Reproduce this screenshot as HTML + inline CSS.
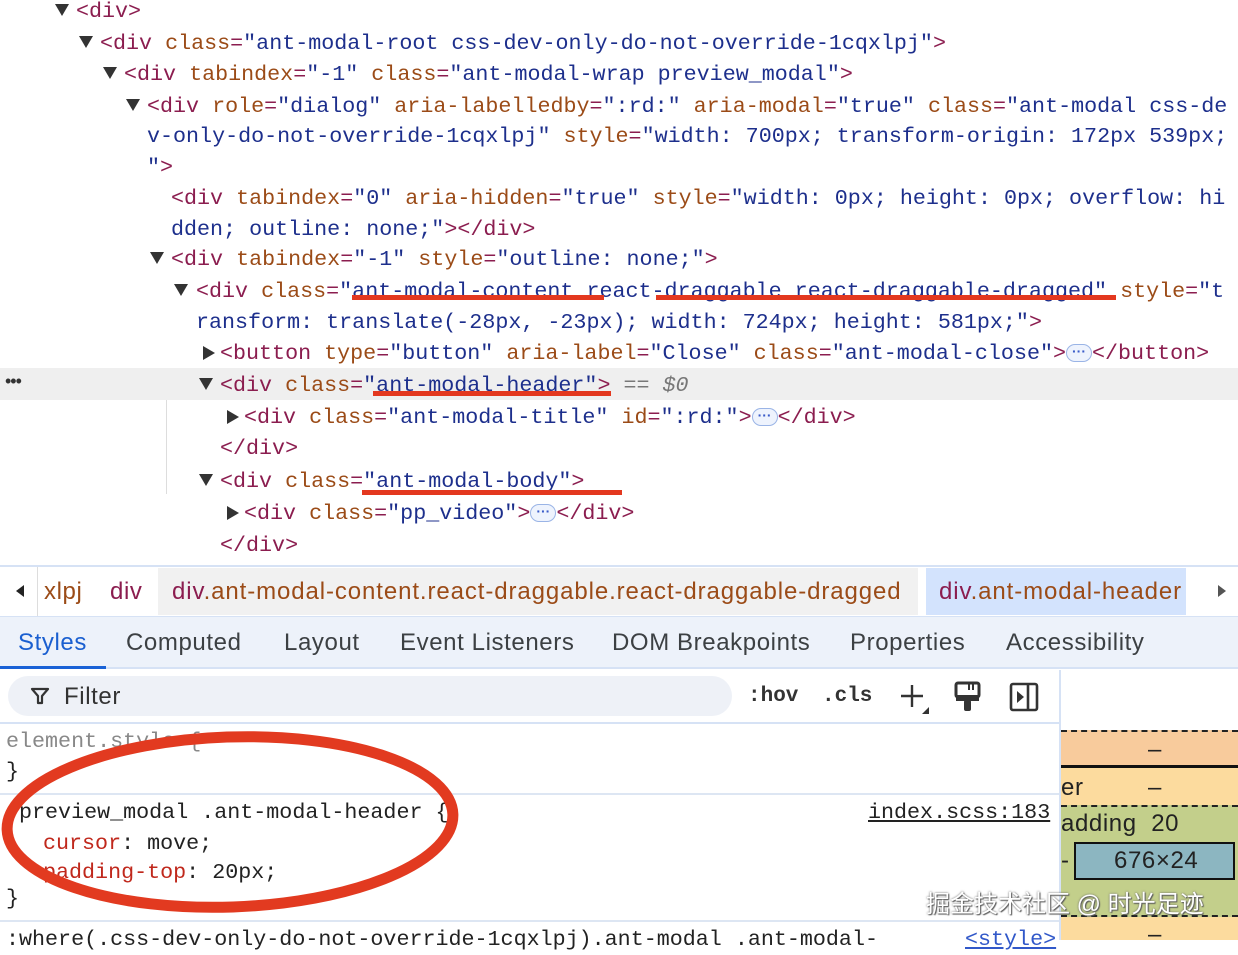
<!DOCTYPE html>
<html><head><meta charset="utf-8">
<style>
*{margin:0;padding:0;box-sizing:border-box}
body{width:1238px;height:940px;overflow:hidden;background:#fff;position:relative;font-family:"Liberation Mono",monospace}
.l{position:absolute;font-family:"Liberation Mono",monospace;font-size:21.7px;line-height:31px;height:31px;white-space:pre;color:#1d2f8c}
.t{color:#8b1d4f}.a{color:#9b4b17}.v{color:#1d2f8c}.k{color:#222}
.tri{position:absolute;width:0;height:0;border-left:7px solid transparent;border-right:7px solid transparent;border-top:12px solid #333}
.trr{position:absolute;width:0;height:0;border-top:7px solid transparent;border-bottom:7px solid transparent;border-left:12px solid #333}
.ul{position:absolute;height:5px;background:#e3381f}
.dots{display:inline-block;width:26px;height:18px;border:1.5px solid #9ab4e6;border-radius:9px;background:#eef3fd;color:#3a5bc9;font-size:14px;line-height:12px;text-align:center;vertical-align:middle;font-family:"Liberation Sans",sans-serif;font-weight:bold}
.s{position:absolute;font-family:"Liberation Sans",sans-serif;font-size:24px;letter-spacing:0.6px;white-space:pre;line-height:30px}
</style></head><body>

<div class="tri" style="left:55px;top:4px"></div>
<div class="l" style="left:76px;top:-4px"><span class="t">&lt;div&gt;</span></div>
<div class="tri" style="left:79px;top:36px"></div>
<div class="l" style="left:100px;top:28px"><span class="t">&lt;div </span><span class="a">class</span><span class="t">=</span>"ant-modal-root css-dev-only-do-not-override-1cqxlpj"<span class="t">&gt;</span></div>
<div class="tri" style="left:103px;top:67px"></div>
<div class="l" style="left:124px;top:59px"><span class="t">&lt;div </span><span class="a">tabindex</span><span class="t">=</span>"-1" <span class="a">class</span><span class="t">=</span>"ant-modal-wrap preview_modal"<span class="t">&gt;</span></div>
<div class="tri" style="left:126px;top:99px"></div>
<div class="l" style="left:147px;top:91px"><span class="t">&lt;div </span><span class="a">role</span><span class="t">=</span>"dialog" <span class="a">aria-labelledby</span><span class="t">=</span>":rd:" <span class="a">aria-modal</span><span class="t">=</span>"true" <span class="a">class</span><span class="t">=</span>"ant-modal css-de</div>
<div class="l" style="left:147px;top:121px">v-only-do-not-override-1cqxlpj" <span class="a">style</span><span class="t">=</span>"width: 700px; transform-origin: 172px 539px;</div>
<div class="l" style="left:147px;top:152px">"<span class="t">&gt;</span></div>
<div class="l" style="left:171px;top:183px"><span class="t">&lt;div </span><span class="a">tabindex</span><span class="t">=</span>"0" <span class="a">aria-hidden</span><span class="t">=</span>"true" <span class="a">style</span><span class="t">=</span>"width: 0px; height: 0px; overflow: hi</div>
<div class="l" style="left:171px;top:214px">dden; outline: none;"<span class="t">&gt;&lt;/div&gt;</span></div>
<div class="tri" style="left:150px;top:252px"></div>
<div class="l" style="left:171px;top:244px"><span class="t">&lt;div </span><span class="a">tabindex</span><span class="t">=</span>"-1" <span class="a">style</span><span class="t">=</span>"outline: none;"<span class="t">&gt;</span></div>
<div class="tri" style="left:174px;top:284px"></div>
<div class="l" style="left:196px;top:276px"><span class="t">&lt;div </span><span class="a">class</span><span class="t">=</span>"ant-modal-content react-draggable react-draggable-dragged" <span class="a">style</span><span class="t">=</span>"t</div>
<div class="l" style="left:196px;top:307px">ransform: translate(-28px, -23px); width: 724px; height: 581px;"<span class="t">&gt;</span></div>
<div class="trr" style="left:203px;top:346px"></div>
<div class="l" style="left:220px;top:338px"><span class="t">&lt;button </span><span class="a">type</span><span class="t">=</span>"button" <span class="a">aria-label</span><span class="t">=</span>"Close" <span class="a">class</span><span class="t">=</span>"ant-modal-close"<span class="t">&gt;</span><span class="dots">···</span><span class="t">&lt;/button&gt;</span></div>
<div style="position:absolute;left:0;top:368px;width:1238px;height:32px;background:#efefef"></div>
<div style="position:absolute;left:5px;top:371px;font-family:'Liberation Sans',sans-serif;font-size:18px;color:#333;letter-spacing:-1px">•••</div>
<div class="tri" style="left:199px;top:378px"></div>
<div class="l" style="left:220px;top:370px"><span class="t">&lt;div </span><span class="a">class</span><span class="t">=</span>"ant-modal-header"<span class="t">&gt;</span> <span style="color:#777">== <i>$0</i></span></div>
<div style="position:absolute;left:166px;top:400px;width:1px;height:94px;background:#ddd"></div>
<div class="trr" style="left:227px;top:410px"></div>
<div class="l" style="left:244px;top:402px"><span class="t">&lt;div </span><span class="a">class</span><span class="t">=</span>"ant-modal-title" <span class="a">id</span><span class="t">=</span>":rd:"<span class="t">&gt;</span><span class="dots">···</span><span class="t">&lt;/div&gt;</span></div>
<div class="l" style="left:220px;top:433px"><span class="t">&lt;/div&gt;</span></div>
<div class="tri" style="left:199px;top:474px"></div>
<div class="l" style="left:220px;top:466px"><span class="t">&lt;div </span><span class="a">class</span><span class="t">=</span>"ant-modal-body"<span class="t">&gt;</span></div>
<div class="trr" style="left:227px;top:506px"></div>
<div class="l" style="left:244px;top:498px"><span class="t">&lt;div </span><span class="a">class</span><span class="t">=</span>"pp_video"<span class="t">&gt;</span><span class="dots">···</span><span class="t">&lt;/div&gt;</span></div>
<div class="l" style="left:220px;top:530px"><span class="t">&lt;/div&gt;</span></div>

<div class="ul" style="left:352px;top:295px;width:252px"></div>
<div class="ul" style="left:656px;top:295px;width:460px"></div>
<div class="ul" style="left:373px;top:391px;width:238px"></div>
<div class="ul" style="left:362px;top:490px;width:260px"></div>

<div style="position:absolute;left:0;top:565px;width:1238px;height:2px;background:#d6e2f5"></div>
<div style="position:absolute;left:0;top:567px;width:1238px;height:49px;background:#fff"></div>
<div style="position:absolute;left:37px;top:567px;width:1px;height:49px;background:#ddd"></div>
<div style="position:absolute;left:16px;top:585px;border-top:6px solid transparent;border-bottom:6px solid transparent;border-right:8px solid #222"></div>
<div style="position:absolute;left:158px;top:568px;width:760px;height:47px;background:#f1f1f1"></div>
<div style="position:absolute;left:926px;top:568px;width:260px;height:47px;background:#d3e3fd"></div>
<div style="position:absolute;left:1218px;top:585px;border-top:6px solid transparent;border-bottom:6px solid transparent;border-left:8px solid #555"></div>
<div class="s" style="left:44px;top:577px;color:#9b4b17">xlpj</div>
<div class="s" style="left:110px;top:577px;color:#8b1d4f">div</div>
<div class="s" style="left:172px;top:577px;color:#9b4b17;letter-spacing:0.9px"><span style="color:#8b1d4f">div</span>.ant-modal-content.react-draggable.react-draggable-dragged</div>
<div class="s" style="left:939px;top:577px;color:#9b4b17;letter-spacing:0.9px"><span style="color:#8b1d4f">div</span>.ant-modal-header</div>

<div style="position:absolute;left:0;top:616px;width:1238px;height:53px;background:#edf2fa;border-top:1px solid #d6e2f5;border-bottom:2px solid #d6e2f5"></div>
<div style="position:absolute;left:0;top:666px;width:106px;height:3px;background:#1a62d6"></div>
<div class="s" style="left:18px;top:628px;color:#1a5fd0">Styles</div>
<div class="s" style="left:126px;top:628px;color:#3c4043">Computed</div>
<div class="s" style="left:284px;top:628px;color:#3c4043">Layout</div>
<div class="s" style="left:400px;top:628px;color:#3c4043">Event Listeners</div>
<div class="s" style="left:612px;top:628px;color:#3c4043">DOM Breakpoints</div>
<div class="s" style="left:850px;top:628px;color:#3c4043">Properties</div>
<div class="s" style="left:1006px;top:628px;color:#3c4043">Accessibility</div>

<div style="position:absolute;left:8px;top:676px;width:724px;height:40px;border-radius:20px;background:#eef1f7"></div>
<svg style="position:absolute;left:30px;top:686px" width="20" height="20" viewBox="0 0 20 20"><path d="M2 3h16l-6 7v7h-4v-7z" fill="none" stroke="#333" stroke-width="2.2" stroke-linejoin="round"/></svg>
<div class="s" style="left:64px;top:682px;color:#333">Filter</div>
<div class="l" style="left:748px;top:681px;color:#333;font-weight:bold;font-size:21px">:hov</div>
<div class="l" style="left:822px;top:681px;color:#333;font-weight:bold;font-size:21px">.cls</div>
<svg style="position:absolute;left:898px;top:682px" width="34" height="34" viewBox="0 0 34 34"><path d="M14 3v22M3 14h22" stroke="#333" stroke-width="2.4"/><path d="M31 25v7h-7z" fill="#333"/></svg>
<svg style="position:absolute;left:954px;top:681px" width="28" height="32" viewBox="0 0 28 32"><rect x="2" y="2" width="23" height="14" rx="2" fill="none" stroke="#333" stroke-width="3"/><rect x="2" y="14" width="23" height="6" fill="#333"/><rect x="10" y="19" width="7" height="11" rx="2" fill="#333"/><path d="M15 3v6M19 3v6" stroke="#333" stroke-width="2"/></svg>
<svg style="position:absolute;left:1009px;top:682px" width="30" height="30" viewBox="0 0 30 30"><rect x="2" y="2" width="26" height="26" rx="2" fill="none" stroke="#333" stroke-width="2.6"/><path d="M19 2v26" stroke="#333" stroke-width="2.6"/><path d="M8 9l7 6-7 6z" fill="#333"/></svg>
<div style="position:absolute;left:0;top:722px;width:1060px;height:2px;background:#d6e2f5"></div>
<div style="position:absolute;left:1059px;top:670px;width:2px;height:270px;background:#d6e2f5"></div>

<div class="l" style="left:6px;top:726px;color:#888">element.style {</div>
<div class="l" style="left:6px;top:756px;color:#222">}</div>
<div style="position:absolute;left:0;top:793px;width:1059px;height:2px;background:#dde6f3"></div>
<div class="l" style="left:6px;top:797px;color:#222">.preview_modal .ant-modal-header {</div>
<div class="l" style="left:868px;top:797px;color:#222;text-decoration:underline">index.scss:183</div>
<div class="l" style="left:43px;top:828px;color:#222"><span style="color:#c0281c">cursor</span>: move;</div>
<div class="l" style="left:43px;top:857px;color:#222"><span style="color:#c0281c">padding-top</span>: 20px;</div>
<div class="l" style="left:6px;top:883px;color:#222">}</div>
<div style="position:absolute;left:0;top:920px;width:1059px;height:2px;background:#dde6f3"></div>
<div class="l" style="left:6px;top:924px;color:#222">:where(.css-dev-only-do-not-override-1cqxlpj).ant-modal .ant-modal-</div>
<div class="l" style="left:965px;top:924px;color:#3158c9;text-decoration:underline">&lt;style&gt;</div>

<div style="position:absolute;left:1061px;top:730px;width:177px;height:38px;background:#f8cb9c;border-top:2px dashed #222;border-bottom:3px solid #111"></div>
<div class="s" style="left:1148px;top:735px;color:#222">–</div>
<div style="position:absolute;left:1061px;top:768px;width:177px;height:38px;background:#fcdb9e"></div>
<div class="s" style="left:1061px;top:773px;color:#222">er</div>
<div class="s" style="left:1148px;top:773px;color:#222">–</div>
<div style="position:absolute;left:1061px;top:805px;width:177px;height:112px;background:#c3cf8b;border-top:2px dashed #222;border-bottom:2px dashed #222"></div>
<div class="s" style="left:1061px;top:809px;color:#222">adding&nbsp;&nbsp;20</div>
<div class="s" style="left:1061px;top:846px;color:#222">-</div>
<div style="position:absolute;left:1074px;top:842px;width:161px;height:38px;background:#8cb6c1;border:2px solid #111"></div>
<div class="s" style="left:1114px;top:846px;color:#222">676×24</div>
<div style="position:absolute;left:1061px;top:917px;width:177px;height:23px;background:#fcdb9e"></div>
<div class="s" style="left:1148px;top:920px;color:#222">–</div>

<svg style="position:absolute;left:0;top:725px" width="470" height="195" viewBox="0 0 470 195"><ellipse cx="230" cy="97" rx="223" ry="85" transform="rotate(-2 230 97)" fill="none" stroke="#e23a20" stroke-width="11"/></svg>

<div style="position:absolute;left:926px;top:884px;font-family:'Liberation Sans','Noto Sans CJK SC',sans-serif;font-size:24px;color:#fff;text-shadow:0 0 2px #666,1px 1px 1px #555;white-space:pre">掘金技术社区 @ 时光足迹</div>
</body></html>
